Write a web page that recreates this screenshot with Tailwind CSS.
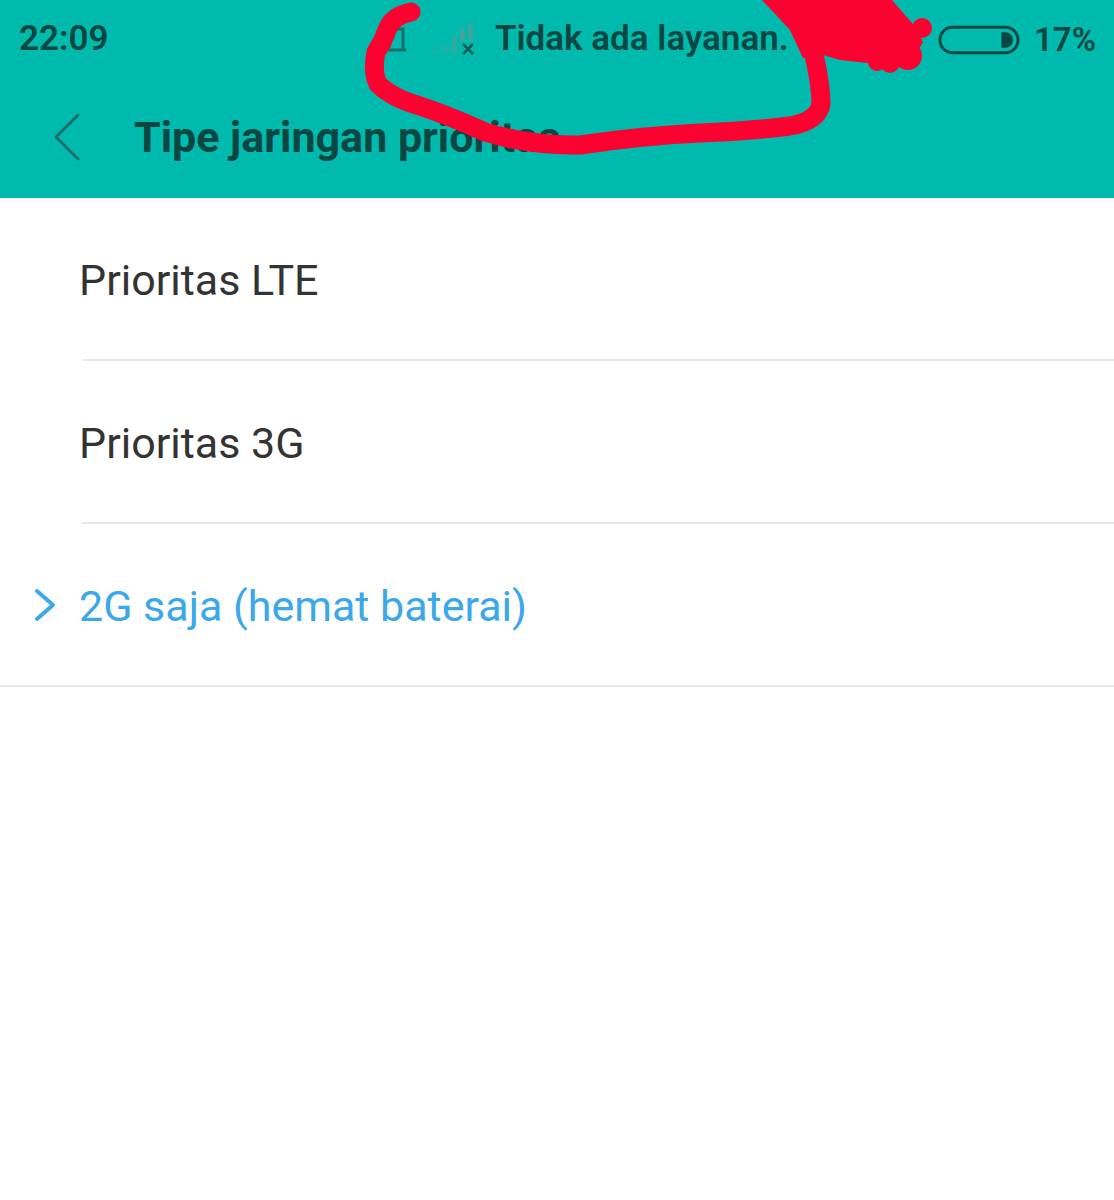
<!DOCTYPE html>
<html lang="en">
<head>
	<meta charset="UTF-8">
	<meta name="viewport" content="width=device-width, initial-scale=1.0">
	<title>Tipe jaringan prioritas</title>
	<script src="https://cdn.jsdelivr.net/npm/@tailwindcss/browser@4"></script>
</head>
<body class="bg-white font-['Roboto',sans-serif]">
	<div class="relative h-[1200px] w-[1114px] overflow-hidden">
		<header class="h-[198px] bg-[#00bbad] text-[#0a4642]">
			<div class="flex h-[78px] items-center pl-[19px] pr-[18px] pt-[1px] text-[35px] font-semibold">
				<span class="w-[359px]">22:09</span>
				<svg class="h-[40px] w-[30px]" viewBox="0 0 30 40" fill="none" stroke="#1f6f69" stroke-width="3">
					<path d="M6 30h22M11 30V14q0-5 6-5h8v21"/>
				</svg>
				<svg class="ml-[8px] h-[40px] w-[60px]" viewBox="0 0 60 40">
					<path d="M14 33h8v-3h-8z" fill="#1fb0a4"/>
					<path d="M25 33h9v-8h-9z" fill="#1fb0a4"/>
					<path d="M36 33h5V16h-5z" fill="#2faaa0"/>
					<path d="M44 21h5V9h-5z" fill="#3fa69d"/>
					<path d="M52 21h5V4h-5z" fill="#3fa69d"/>
					<path d="M47 24l10 10M57 24l-10 10" stroke="#0f5a55" stroke-width="2.5"/>
				</svg>
				<span class="ml-[19px]">Tidak ada layanan.</span>
				<span class="ml-auto flex items-center gap-[14px]">
					<svg class="h-[30px] w-[82px]" viewBox="0 0 84 30" fill="none">
						<rect x="2" y="2" width="80" height="26" rx="13" stroke="#0a4642" stroke-width="3"/>
						<path d="M65 7h4a8 8 0 0 1 0 16h-4z" fill="#0a4642"/>
					</svg>
					<span class="text-[33px]">17%</span>
				</span>
			</div>
			<div class="flex h-[120px] items-center pb-[2px]">
				<svg class="ml-[52px] h-[50px] w-[30px]" viewBox="0 0 30 50" fill="none" stroke="#1f6f69" stroke-width="3" stroke-linecap="round" stroke-linejoin="round">
					<path d="M26 3L4 25l22 22"/>
				</svg>
				<h1 class="ml-[52px] text-[43px] font-bold">Tipe jaringan prioritas</h1>
			</div>
		</header>
		<ul class="text-[43px] text-[#333333]">
			<li class="ml-[82px] flex h-[163px] items-center border-b-2 border-[#e8e8e8] pt-[4px] -indent-[3px]">Prioritas LTE</li>
			<li class="ml-[82px] flex h-[163px] items-center border-b-2 border-[#e8e8e8] pt-[4px] -indent-[3px]">Prioritas 3G</li>
			<li class="flex h-[163px] items-center border-b-2 border-[#e8e8e8] text-[#3aa8ea]">
				<svg class="ml-[34px] h-[34px] w-[22px]" viewBox="0 0 22 34" fill="none" stroke="#3aa8ea" stroke-width="4" stroke-linecap="round" stroke-linejoin="round">
					<path d="M3 3l16 14L3 31"/>
				</svg>
				<span class="ml-[23px] mt-[4px]">2G saja (hemat baterai)</span>
			</li>
		</ul>
		<!-- red marker scribble on top of the screenshot -->
		<svg class="absolute left-0 top-0 h-[200px] w-[1114px]" viewBox="0 0 1114 200" fill="none">
			<path d="M411 12Q392 16 387 30Q383 42 376 52Q372 72 378 84Q392 98 420 106Q450 116 485 132Q530 146 580 145Q640 136 700 133Q750 131 790 126Q818 121 821 104Q821 85 814 55" stroke="#fb0231" stroke-width="19" stroke-linecap="round" stroke-linejoin="round"/>
			<path d="M762 0L790 30L803 58L823 55L840 60L867 63L913 60L923 42L912 23L892 0Z" fill="#fb0231"/>
			<circle cx="877" cy="62" r="9" fill="#fb0231"/>
			<circle cx="890" cy="63" r="10" fill="#fb0231"/>
			<circle cx="908" cy="56" r="14" fill="#fb0231"/>
			<circle cx="922" cy="28" r="10" fill="#fb0231"/>
		</svg>
	</div>
</body>
</html>
